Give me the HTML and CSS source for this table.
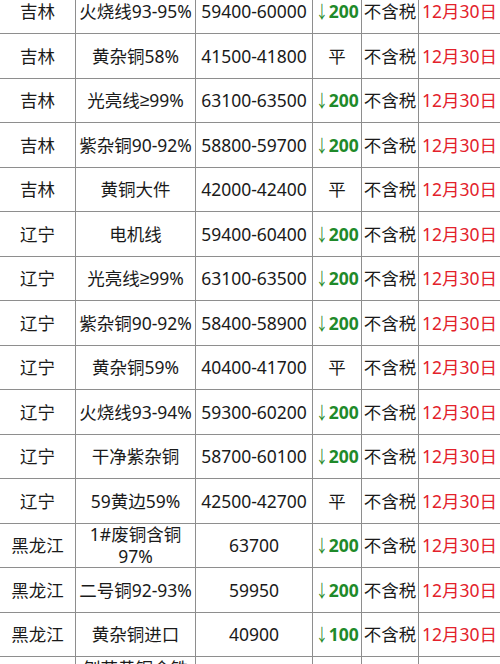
FILE: index.html
```html
<!DOCTYPE html>
<html lang="zh">
<head>
<meta charset="utf-8">
<link rel="stylesheet" href="styles.css">
</head>
<body>
<div class="sheet">
  <div class="row"><div class="c">吉林</div><div class="c">火烧线93-95%</div><div class="c">59400-60000</div><div class="c down"><span class="arr">↓</span>200</div><div class="c">不含税</div><div class="c date">12月30日</div></div>
  <div class="row"><div class="c">吉林</div><div class="c">黄杂铜58%</div><div class="c">41500-41800</div><div class="c">平</div><div class="c">不含税</div><div class="c date">12月30日</div></div>
  <div class="row"><div class="c">吉林</div><div class="c">光亮线<span class="sym">≥</span>99%</div><div class="c">63100-63500</div><div class="c down"><span class="arr">↓</span>200</div><div class="c">不含税</div><div class="c date">12月30日</div></div>
  <div class="row"><div class="c">吉林</div><div class="c">紫杂铜90-92%</div><div class="c">58800-59700</div><div class="c down"><span class="arr">↓</span>200</div><div class="c">不含税</div><div class="c date">12月30日</div></div>
  <div class="row"><div class="c">吉林</div><div class="c">黄铜大件</div><div class="c">42000-42400</div><div class="c">平</div><div class="c">不含税</div><div class="c date">12月30日</div></div>
  <div class="row"><div class="c">辽宁</div><div class="c">电机线</div><div class="c">59400-60400</div><div class="c down"><span class="arr">↓</span>200</div><div class="c">不含税</div><div class="c date">12月30日</div></div>
  <div class="row"><div class="c">辽宁</div><div class="c">光亮线<span class="sym">≥</span>99%</div><div class="c">63100-63500</div><div class="c down"><span class="arr">↓</span>200</div><div class="c">不含税</div><div class="c date">12月30日</div></div>
  <div class="row"><div class="c">辽宁</div><div class="c">紫杂铜90-92%</div><div class="c">58400-58900</div><div class="c down"><span class="arr">↓</span>200</div><div class="c">不含税</div><div class="c date">12月30日</div></div>
  <div class="row"><div class="c">辽宁</div><div class="c">黄杂铜59%</div><div class="c">40400-41700</div><div class="c">平</div><div class="c">不含税</div><div class="c date">12月30日</div></div>
  <div class="row"><div class="c">辽宁</div><div class="c">火烧线93-94%</div><div class="c">59300-60200</div><div class="c down"><span class="arr">↓</span>200</div><div class="c">不含税</div><div class="c date">12月30日</div></div>
  <div class="row"><div class="c">辽宁</div><div class="c">干净紫杂铜</div><div class="c">58700-60100</div><div class="c down"><span class="arr">↓</span>200</div><div class="c">不含税</div><div class="c date">12月30日</div></div>
  <div class="row"><div class="c">辽宁</div><div class="c">59黄边59%</div><div class="c">42500-42700</div><div class="c">平</div><div class="c">不含税</div><div class="c date">12月30日</div></div>
  <div class="row"><div class="c">黑龙江</div><div class="c">1#废铜含铜<br>97%</div><div class="c">63700</div><div class="c down"><span class="arr">↓</span>200</div><div class="c">不含税</div><div class="c date">12月30日</div></div>
  <div class="row"><div class="c">黑龙江</div><div class="c">二号铜92-93%</div><div class="c">59950</div><div class="c down"><span class="arr">↓</span>200</div><div class="c">不含税</div><div class="c date">12月30日</div></div>
  <div class="row"><div class="c">黑龙江</div><div class="c">黄杂铜进口</div><div class="c">40900</div><div class="c down"><span class="arr">↓</span>100</div><div class="c">不含税</div><div class="c date">12月30日</div></div>
  <div class="row"><div class="c">黑龙江</div><div class="c">刨花黄铜含铁<br>量低</div><div class="c">40500</div><div class="c down"><span class="arr">↓</span>100</div><div class="c">不含税</div><div class="c date">12月30日</div></div>
</div>
</body>
</html>
```

FILE: styles.css
```css
html, body {
  margin: 0;
  padding: 0;
  background: #ffffff;
}
body {
  width: 500px;
  height: 664px;
  overflow: hidden;
  font-family: "Noto Sans", "Noto Sans CJK SC", sans-serif;
  font-size: 17.5px;
  color: #1a1a1a;
}
.sheet {
  margin-top: -10.5px;
}
.row {
  display: grid;
  grid-template-columns: 76px 120px 117px 49px 57px 81px;
  height: 44.5px;
  box-sizing: border-box;
  border-bottom: 1px solid #8e8e8e;
}
.c {
  display: flex;
  align-items: center;
  justify-content: center;
  text-align: center;
  box-sizing: border-box;
  border-right: 1px solid #8e8e8e;
  line-height: 22px;
  white-space: nowrap;
  overflow: hidden;
}
.c:last-child {
  border-right: none;
}
.sym {
  font-family: "Liberation Sans", "DejaVu Sans", sans-serif;
}
.down {
  color: #1f8a2a;
  font-weight: 700;
}
.arr {
  display: inline-block;
  font-weight: 400;
  transform: scaleX(0.7);
  margin: 0 -2px 0 -2px;
}
.date {
  color: #e3212b;
}
```
